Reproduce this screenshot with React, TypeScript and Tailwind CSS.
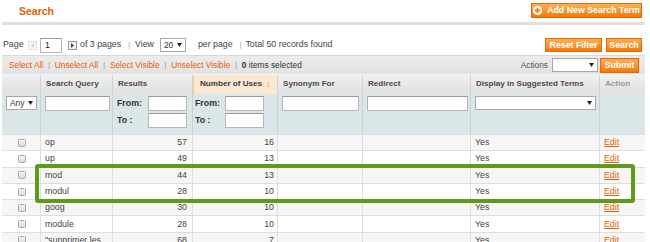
import React from "react";

const cols = [39, 72, 80, 85, 85, 108, 129, 45];

const rows = [
  { q: "op", r: 57, n: 16 },
  { q: "up", r: 49, n: 13 },
  { q: "mod", r: 44, n: 13 },
  { q: "modul", r: 28, n: 10 },
  { q: "goog", r: 30, n: 10 },
  { q: "module", r: 28, n: 10 },
  { q: "\"supprimer les", r: 68, n: 7 },
];

function OrangeButton({ children, className = "" }: { children: React.ReactNode; className?: string }) {
  return (
    <div
      className={
        "flex items-center justify-center h-[14px] border border-[#ed6502] bg-linear-to-b from-[#fdb150] to-[#ef7a00] text-white font-bold text-[8.8px] leading-none " +
        className
      }
    >
      {children}
    </div>
  );
}

function Input({ className = "", children }: { className?: string; children?: React.ReactNode }) {
  return (
    <div className={"h-[15px] bg-white border border-[#b6b6b6] border-t-[#9a9a9a] " + className}>{children}</div>
  );
}

function SelectBox({ className = "", text = "" }: { className?: string; text?: string }) {
  return (
    <div
      className={
        "h-[14px] bg-white border border-[#a8a8a8] flex items-center justify-between pl-[3px] pr-[3px] font-normal " + className
      }
    >
      <span className="text-[8.4px] text-[#333] leading-none">{text}</span>
      <svg width="5" height="4" viewBox="0 0 5 4">
        <path d="M0 0 L5 0 L2.5 4 Z" fill="#222" />
      </svg>
    </div>
  );
}

function Check() {
  return (
    <div className="ml-[16px] w-[8px] h-[8px] rounded-[1.5px] border border-[#a9a9a9] bg-linear-to-b from-[#f4f4f4] to-[#dcdcdc]" />
  );
}

export default function App() {
  return (
    <div className="relative w-[650px] h-[242px] overflow-hidden bg-white font-['Liberation_Sans',Arial,sans-serif] text-[#444]">
      {/* title row */}
      <div className="flex items-center justify-between h-[22px] pl-[19px] pr-[8px]">
        <div className="text-[10.5px] font-bold text-[#eb5e00] pt-[2px]">Search</div>
        <OrangeButton className="w-[111px] h-[15px] gap-[5px] mt-[-1px]">
          <svg width="9" height="9" viewBox="0 0 10 10">
            <circle cx="5" cy="5" r="5" fill="#fff" />
            <rect x="4" y="2" width="2" height="6" fill="#f07d10" />
            <rect x="2" y="4" width="6" height="2" fill="#f07d10" />
          </svg>
          <span>Add New Search Term</span>
        </OrangeButton>
      </div>
      <div className="h-[3px] bg-[#e0e0e0] ml-[2px] mr-[5px]" />

      {/* pager row */}
      <div className="flex items-center justify-between h-[14px] mt-[13px] pl-[3px] pr-[8px] text-[8.8px]">
        <div className="flex items-center">
          <span>Page</span>
          <div className="ml-[4.5px] w-[9px] h-[9px] border border-[#e2e2e2] bg-[#f6f6f6] flex items-center justify-center">
            <svg width="3" height="5" viewBox="0 0 3 5">
              <path d="M3 0 L0 2.5 L3 5 Z" fill="#d6d6d6" />
            </svg>
          </div>
          <Input className="ml-[3px] w-[22px] h-[14px] flex items-center pl-[4px]">
            <span className="text-[#222] leading-none">1</span>
          </Input>
          <div className="ml-[6px] w-[9px] h-[9px] border border-[#9a9a9a] bg-[#f3f3f3] flex items-center justify-center">
            <svg width="3" height="5" viewBox="0 0 3 5">
              <path d="M0 0 L3 2.5 L0 5 Z" fill="#444" />
            </svg>
          </div>
          <span className="ml-[3px]">of 3 pages</span>
          <span className="ml-[7px] text-[#999] text-[7px]">|</span>
          <span className="ml-[5px]">View</span>
          <SelectBox className="ml-[6px] w-[26px]" text="20" />
          <span className="ml-[12px]">per page</span>
          <span className="ml-[7px] text-[#999] text-[7px]">|</span>
          <span className="ml-[4px]">Total 50 records found</span>
        </div>
        <div className="flex items-center gap-[4px]">
          <OrangeButton className="w-[57px]">Reset Filter</OrangeButton>
          <OrangeButton className="w-[36px]">Search</OrangeButton>
        </div>
      </div>

      {/* grid */}
      <div className="ml-[2px] mr-[5px] mt-[3px]">
        {/* massaction */}
        <div className="flex items-center justify-between h-[19px] bg-linear-to-b from-[#ececec] to-[#e2e2e2] border-t border-[#d8d8d8] pl-[7px] pr-[6px] text-[8.3px]">
          <div className="flex items-center">
            <span className="text-[#eb5e00]">Select All</span>
            <span className="mx-[5px] text-[#888] text-[6.5px]">|</span>
            <span className="text-[#eb5e00]">Unselect All</span>
            <span className="mx-[5px] text-[#888] text-[6.5px]">|</span>
            <span className="text-[#eb5e00]">Select Visible</span>
            <span className="mx-[5px] text-[#888] text-[6.5px]">|</span>
            <span className="text-[#eb5e00]">Unselect Visible</span>
            <span className="mx-[5px] text-[#888] text-[6.5px]">|</span>
            <span className="text-[#333]">
              <b>0</b> items selected
            </span>
          </div>
          <div className="flex items-center">
            <span className="text-[#555]">Actions</span>
            <SelectBox className="ml-[4px] w-[46px] h-[13px]" />
            <OrangeButton className="ml-[2px] w-[39px] h-[15px]">Submit</OrangeButton>
          </div>
        </div>

        {/* headings */}
        <div className="flex h-[20px] bg-linear-to-b from-[#f0f0f0] to-[#e0e0e0] border-t border-[#f7f7f7] text-[8.1px] font-bold text-[#4a4a4a]">
          {["", "Search Query", "Results", "Number of Uses", "Synonym For", "Redirect", "Display in Suggested Terms", "Action"].map((h, i) => (
            <div
              key={i}
              style={{ width: cols[i] }}
              className={
                "flex items-center border-r border-[#d3d3d3] " +
                (i === 3 ? "bg-[#fae8d2] border-l border-l-[#f5c99a] pl-[6px] text-[#3a3a3a]" : "pl-[5px]") +
                (i === 7 ? " text-[#9a9a9a] font-bold border-r-0" : "")
              }
            >
              {h}
              {i === 3 && <span className="ml-[4px] text-[#f07a1a] text-[9px]">↓</span>}
            </div>
          ))}
        </div>

        {/* filter */}
        <div className="flex h-[40px] bg-[#dae6e8] text-[8.8px] font-bold text-[#333]">
          <div style={{ width: cols[0] }} className="border-r border-[#c6d3d5] pt-[2px] pl-[4px]">
            <SelectBox className="w-[31px]" text="Any" />
          </div>
          <div style={{ width: cols[1] }} className="border-r border-[#c6d3d5] pt-[2px] pl-[4px]">
            <Input className="w-[65px]" />
          </div>
          {[2, 3].map((c) => (
            <div
              key={c}
              style={{ width: cols[c] }}
              className={"border-r border-[#c6d3d5] pt-[2px] " + (c === 2 ? "pl-[4px]" : "pl-[2px]")}
            >
              <div className="flex items-center">
                <span className={c === 2 ? "w-[31px]" : "w-[30px]"}>From:</span>
                <Input className="w-[39px]" />
              </div>
              <div className="flex items-center mt-[2px]">
                <span className={c === 2 ? "w-[31px]" : "w-[30px]"}>To :</span>
                <Input className="w-[39px] h-[14px]" />
              </div>
            </div>
          ))}
          <div style={{ width: cols[4] }} className="border-r border-[#c6d3d5] pt-[2px] pl-[4px]">
            <Input className="w-[77px]" />
          </div>
          <div style={{ width: cols[5] }} className="border-r border-[#c6d3d5] pt-[2px] pl-[4px]">
            <Input className="w-[101px]" />
          </div>
          <div style={{ width: cols[6] }} className="border-r border-[#c6d3d5] pt-[2px] pl-[4px]">
            <SelectBox className="w-[121px] h-[13px]" />
          </div>
          <div style={{ width: cols[7] }} />
        </div>

        {/* data rows */}
        {rows.map((r, idx) => (
          <div
            key={idx}
            className={
              "flex h-[16.3px] border-t border-[#dadfe0] text-[8.8px] " + (idx % 2 === 0 ? "bg-[#f6f6f6]" : "bg-white")
            }
          >
            <div style={{ width: cols[0] }} className="flex items-center border-r border-[#dadfe0]">
              <Check />
            </div>
            <div
              style={{ width: cols[1] }}
              className="flex items-center border-r border-[#dadfe0] pl-[4px] whitespace-nowrap overflow-hidden"
            >
              {r.q}
            </div>
            <div style={{ width: cols[2] }} className="flex items-center justify-end border-r border-[#dadfe0] pr-[5px]">
              {r.r}
            </div>
            <div style={{ width: cols[3] }} className="flex items-center justify-end border-r border-[#dadfe0] pr-[3px]">
              {r.n}
            </div>
            <div style={{ width: cols[4] }} className="border-r border-[#dadfe0]" />
            <div style={{ width: cols[5] }} className="border-r border-[#dadfe0]" />
            <div style={{ width: cols[6] }} className="flex items-center border-r border-[#dadfe0] pl-[4px]">
              Yes
            </div>
            <div style={{ width: cols[7] }} className="flex items-center pl-[4px]">
              <span className="text-[#eb5e00] underline">Edit</span>
            </div>
          </div>
        ))}
      </div>

      {/* highlight */}
      <div className="absolute left-[35px] top-[164px] w-[600px] h-[39px] border-[4px] border-[#5f9b1a] rounded-[3px]" />
    </div>
  );
}
